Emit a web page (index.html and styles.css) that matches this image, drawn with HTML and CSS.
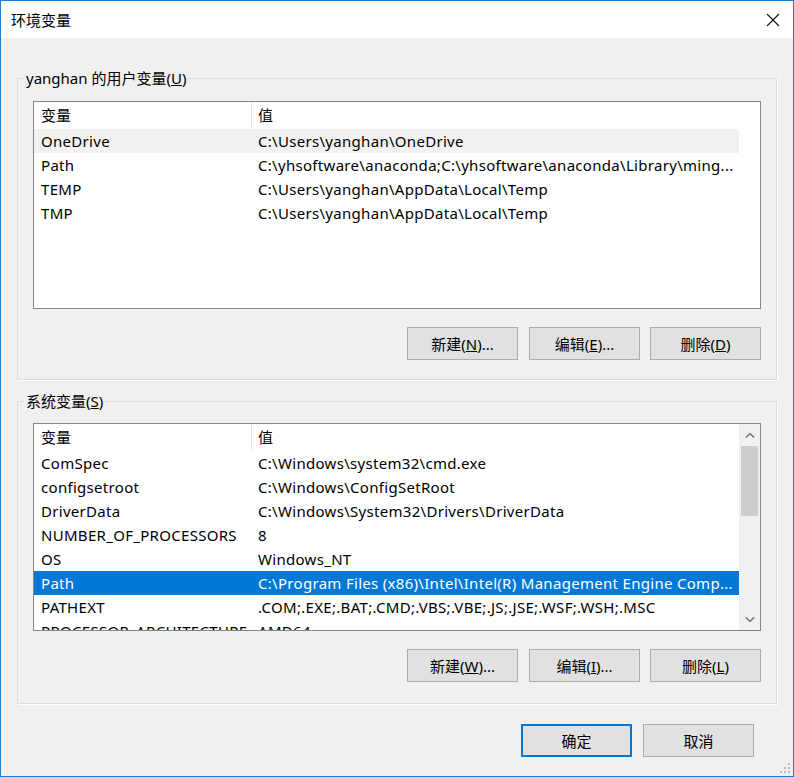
FILE: index.html
```html
<!DOCTYPE html>
<html lang="zh-CN">
<head>
  <meta charset="UTF-8" />
  <title>环境变量</title>
  <link rel="stylesheet" href="styles.css">
</head>
<body>
  <div class="window">
    <div class="titlebar">
      <span class="title">环境变量</span>
      <span class="close">
        <svg width="14" height="14" viewBox="0 0 14 14"><path d="M1 1L13 13M13 1L1 13" stroke="#111" stroke-width="1.1" fill="none"/></svg>
      </span>
    </div>

    <div class="content">
      <fieldset class="group">
        <legend>yanghan 的用户变量(<u>U</u>)</legend>
        <div class="group-body first">
          <div class="list">
            <div class="list-main">
              <div class="row head"><span>变量</span><span>值</span></div>
              <div class="row hover"><span>OneDrive</span><span>C:\Users\yanghan\OneDrive</span></div>
              <div class="row"><span>Path</span><span>C:\yhsoftware\anaconda;C:\yhsoftware\anaconda\Library\ming...</span></div>
              <div class="row"><span>TEMP</span><span>C:\Users\yanghan\AppData\Local\Temp</span></div>
              <div class="row"><span>TMP</span><span>C:\Users\yanghan\AppData\Local\Temp</span></div>
            </div>
          </div>
          <div class="btn-row">
            <button class="btn">新建(<u>N</u>)...</button>
            <button class="btn">编辑(<u>E</u>)...</button>
            <button class="btn">删除(<u>D</u>)</button>
          </div>
        </div>
      </fieldset>

      <fieldset class="group second">
        <legend>系统变量(<u>S</u>)</legend>
        <div class="group-body">
          <div class="list">
            <div class="list-main">
              <div class="row head"><span>变量</span><span>值</span></div>
              <div class="row"><span>ComSpec</span><span>C:\Windows\system32\cmd.exe</span></div>
              <div class="row"><span>configsetroot</span><span>C:\Windows\ConfigSetRoot</span></div>
              <div class="row"><span>DriverData</span><span>C:\Windows\System32\Drivers\DriverData</span></div>
              <div class="row"><span>NUMBER_OF_PROCESSORS</span><span>8</span></div>
              <div class="row"><span>OS</span><span>Windows_NT</span></div>
              <div class="row selected"><span>Path</span><span>C:\Program Files (x86)\Intel\Intel(R) Management Engine Comp...</span></div>
              <div class="row"><span>PATHEXT</span><span>.COM;.EXE;.BAT;.CMD;.VBS;.VBE;.JS;.JSE;.WSF;.WSH;.MSC</span></div>
              <div class="row"><span>PROCESSOR_ARCHITECTURE</span><span>AMD64</span></div>
            </div>
            <div class="scrollbar">
              <div class="arrow">
                <svg width="10" height="6" viewBox="0 0 10 6"><path d="M1 5.5L5 1.5L9 5.5" stroke="#606060" stroke-width="1.2" fill="none"/></svg>
              </div>
              <div class="track"><div class="thumb"></div></div>
              <div class="arrow">
                <svg width="10" height="6" viewBox="0 0 10 6"><path d="M1 0.5L5 4.5L9 0.5" stroke="#606060" stroke-width="1.2" fill="none"/></svg>
              </div>
            </div>
          </div>
          <div class="btn-row">
            <button class="btn">新建(<u>W</u>)...</button>
            <button class="btn">编辑(<u>I</u>)...</button>
            <button class="btn">删除(<u>L</u>)</button>
          </div>
        </div>
      </fieldset>

      <div class="footer">
        <button class="btn default">确定</button>
        <button class="btn">取消</button>
      </div>
    </div>

    <svg class="grip" width="10" height="10" viewBox="0 0 10 10">
      <rect x="8" y="0" width="2" height="2" fill="#b8b8b8"/>
      <rect x="4" y="4" width="2" height="2" fill="#b8b8b8"/>
      <rect x="8" y="4" width="2" height="2" fill="#b8b8b8"/>
      <rect x="0" y="8" width="2" height="2" fill="#b8b8b8"/>
      <rect x="4" y="8" width="2" height="2" fill="#b8b8b8"/>
      <rect x="8" y="8" width="2" height="2" fill="#b8b8b8"/>
    </svg>
  </div>
</body>
</html>
```

FILE: styles.css
```css
body {
  margin: 0;
  font-family: "Noto Sans", "Noto Sans CJK SC", sans-serif;
  font-size: 15px;
  color: #000;
}
.window {
  position: relative;
  height: 777px;
  box-sizing: border-box;
  border: 1px solid #1c7dd6;
  background: #f0f0f0;
}
.titlebar {
  height: 37px;
  background: #fff;
  display: flex;
  align-items: center;
  justify-content: space-between;
  padding-left: 10px;
}
.title {
  font-size: 15px;
}
.close {
  display: flex;
  width: 40px;
  justify-content: center;
}
.content {
  padding: 30px 16px 0 16px;
}
.group {
  margin: 0;
  padding: 0;
  border: 1px solid #dcdcdc;
  box-shadow: 1px 1px 0 #fff;
}
.group.second {
  margin-top: 11px;
}
.group legend {
  margin-left: 6px;
  padding: 0 2px;
  line-height: 20px;
}
.group-body {
  padding: 12px 15px 21px 15px;
}
.group-body.first {
  padding: 13px 15px 19px 15px;
}
.list {
  height: 208px;
  box-sizing: border-box;
  border: 1px solid #828790;
  background: #fff;
  display: flex;
  overflow: hidden;
}
.list-main {
  width: 705px;
}
.row {
  display: grid;
  grid-template-columns: 217px 488px;
  height: 24px;
  line-height: 24px;
  letter-spacing: 0.3px;
}
.row span {
  padding-left: 7px;
  white-space: nowrap;
  overflow: hidden;
}
.row.head {
  height: 27px;
  line-height: 26px;
  letter-spacing: 0;
}
.row.head span + span {
  border-left: 1px solid #e5e5e5;
  padding-left: 6px;
}
.row.hover {
  background: #f2f2f2;
}
.row.selected {
  background: #0078d7;
  color: #fff;
}
.scrollbar {
  width: 21px;
  background: #f0f0f0;
  display: flex;
  flex-direction: column;
}
.arrow {
  height: 21px;
  display: flex;
  align-items: center;
  justify-content: center;
}
.track {
  flex: 1;
  padding: 1px 2px;
}
.thumb {
  height: 70px;
  background: #cdcdcd;
}
.btn-row {
  display: flex;
  justify-content: flex-end;
  gap: 11px;
  margin-top: 18px;
}
.btn-row .btn:last-child {
  margin-left: -1px;
}
.btn {
  width: 111px;
  height: 33px;
  background: #e1e1e1;
  border: 1px solid #adadad;
  font-family: inherit;
  font-size: 15px;
  color: #000;
  padding: 0;
}
.btn.default {
  border-color: #0078d7;
  box-shadow: inset 0 0 0 1px #0078d7;
}
.footer {
  display: flex;
  justify-content: flex-end;
  gap: 11px;
  margin-top: 20px;
  padding-right: 23px;
}
.grip {
  position: absolute;
  right: 3px;
  bottom: 3px;
}
```
